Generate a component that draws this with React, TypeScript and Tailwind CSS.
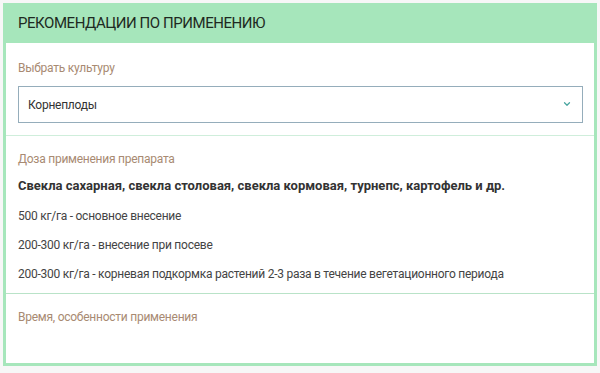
import React from 'react';
import { FiChevronDown } from 'react-icons/fi';

const doses = [
  '500 кг/га - основное внесение',
  '200-300 кг/га - внесение при посеве',
  '200-300 кг/га - корневая подкормка растений 2-3 раза в течение вегетационного периода',
];

export default function App() {
  const [crop, setCrop] = React.useState('Корнеплоды');

  return (
    <div className="h-[373px] w-[600px] bg-[#f7f7f7] p-[3px] font-['Roboto',sans-serif]">
      <section className="h-[363px] w-[594px] border-[3px] border-t-0 border-[#a6e6bb] bg-white">
        <div className="flex h-[40px] items-center bg-[#a6e6bb] px-[12px] pt-[1px]">
          <h2 className="text-[15px] uppercase tracking-[-0.45px] text-[#1e2a22]">
            Рекомендации по применению
          </h2>
        </div>

        <div className="pt-[16px] pr-[11px] pb-[12px] pl-[12px] text-[12px] tracking-[-0.25px]">
          <label className="block text-[#a88a72]">Выбрать культуру</label>
          <div className="relative mt-[9px]">
            <select
              value={crop}
              onChange={(e) => setCrop(e.target.value)}
              className="h-[37px] w-full appearance-none border border-[#95adbb] bg-white pl-[9px] text-[#333] outline-none"
            >
              <option>Корнеплоды</option>
              <option>Зерновые</option>
            </select>
            <FiChevronDown
              className="pointer-events-none absolute top-[13px] right-[11px] h-[10px] w-[10px] text-[#4aa6a0]"
              strokeWidth={3}
            />
          </div>
        </div>

        <div className="border-t border-[#cfeedb] px-[12px] pt-[14px] pb-[10px] text-[12px] tracking-[-0.25px] text-[#444]">
          <p className="text-[#a88a72]">Доза применения препарата</p>
          <p className="mt-[8px] text-[13px] font-bold tracking-normal text-[#333]">
            Свекла сахарная, свекла столовая, свекла кормовая, турнепс, картофель и др.
          </p>
          {doses.map((d) => (
            <p key={d} className="mt-[11px]">
              {d}
            </p>
          ))}
        </div>

        <div className="border-t border-[#b9e3c8] px-[12px] pt-[14px] text-[12px] tracking-[-0.25px] text-[#a88a72]">
          Время, особенности применения
        </div>
      </section>
    </div>
  );
}
